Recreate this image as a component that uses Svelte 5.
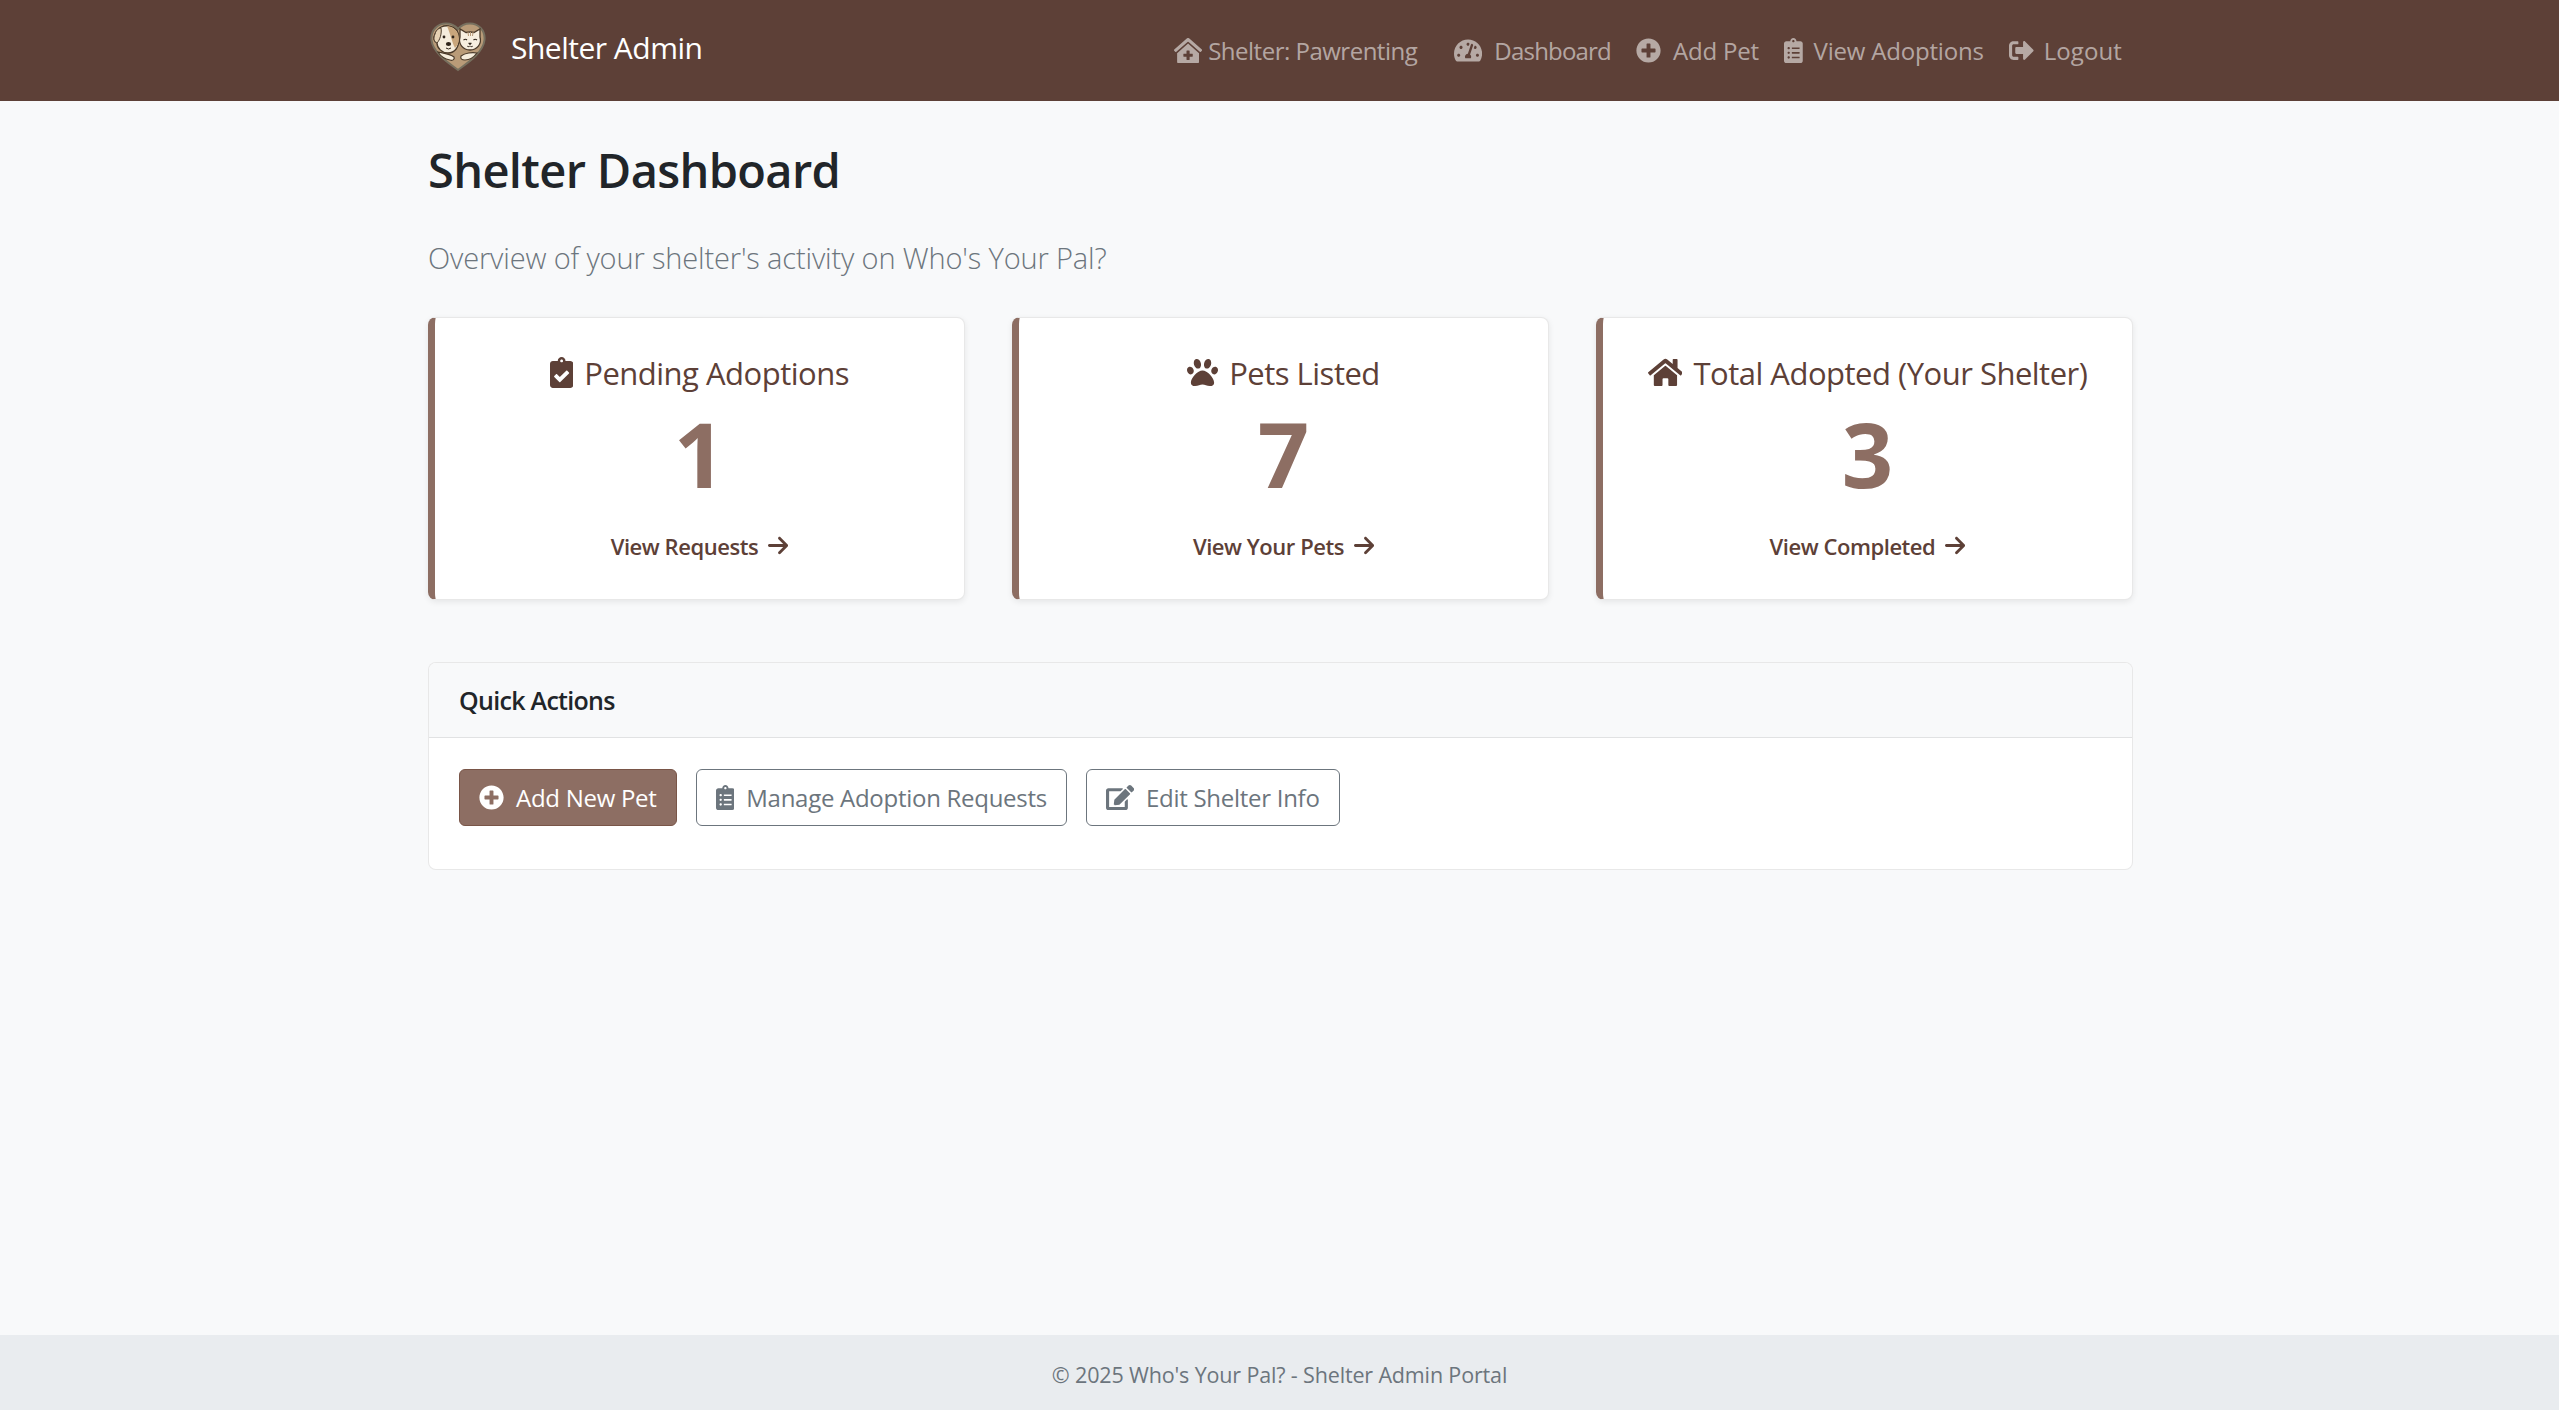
<script>
  const navLinks = [
    { label: 'Shelter: Pawrenting', icon: 'clinic', w: 576, gap: 6, after: 37, ls: -0.5 },
    { label: 'Dashboard', icon: 'gauge', w: 576, gap: 12, after: 25, ls: -0.8 },
    { label: 'Add Pet', icon: 'plus', w: 512, gap: 12, after: 25, ls: -0.2 },
    { label: 'View Adoptions', icon: 'list', w: 384, gap: 11, after: 25, ls: -0.2 },
    { label: 'Logout', icon: 'logout', w: 512, gap: 10, after: 0, ls: 0.1 }
  ];

  const stats = [
    { title: 'Pending Adoptions', value: 1, link: 'View Requests', icon: 'check', w: 384 },
    { title: 'Pets Listed', value: 7, link: 'View Your Pets', icon: 'paw', w: 512 },
    { title: 'Total Adopted (Your Shelter)', value: 3, link: 'View Completed', icon: 'home', w: 576 }
  ];

  const paths = {
    clinic: 'M288 115L69.47 307.71c-1.62 1.46-3.69 2.14-5.47 3.35V496a16 16 0 0 0 16 16h416a16 16 0 0 0 16-16V311.1c-1.7-1.16-3.72-1.82-5.26-3.2zm96 261a8 8 0 0 1-8 8h-56v56a8 8 0 0 1-8 8h-48a8 8 0 0 1-8-8v-56h-56a8 8 0 0 1-8-8v-48a8 8 0 0 1 8-8h56v-56a8 8 0 0 1 8-8h48a8 8 0 0 1 8 8v56h56a8 8 0 0 1 8 8zm186.69-139.72l-255.94-226a39.85 39.85 0 0 0-53.45 0l-256 226a16 16 0 0 0-1.21 22.6L25.5 282.7a16 16 0 0 0 22.6 1.21L277.42 81.63a16 16 0 0 1 21.17 0L527.91 283.9a16 16 0 0 0 22.6-1.21l21.4-23.82a16 16 0 0 0-1.22-22.59z',
    gauge: 'M288 32C128.94 32 0 160.94 0 320c0 52.8 14.25 102.26 39.06 144.8 5.61 9.62 16.3 15.2 27.44 15.2h443c11.14 0 21.83-5.58 27.44-15.2C561.75 422.26 576 372.8 576 320c0-159.06-128.94-288-288-288zm0 64c14.71 0 26.58 10.13 30.32 23.65-1.11 2.26-2.64 4.23-3.45 6.67l-9.22 27.67c-5.13 3.49-10.97 6.01-17.64 6.01-17.67 0-32-14.33-32-32S270.33 96 288 96zM96 384c-17.67 0-32-14.33-32-32s14.33-32 32-32 32 14.33 32 32-14.33 32-32 32zm48-160c-17.67 0-32-14.33-32-32s14.33-32 32-32 32 14.33 32 32-14.33 32-32 32zm246.77-72.41l-61.33 184C343.13 347.33 352 364.54 352 384c0 11.72-3.38 22.55-8.88 32H232.88c-5.5-9.45-8.88-20.28-8.88-32 0-33.94 26.5-61.43 59.9-63.59l61.34-184.01c4.17-12.56 17.73-19.45 30.36-15.17 12.57 4.19 19.35 17.79 15.17 30.36zm14.66 57.2l15.52-46.55c3.47-1.29 7.13-2.23 11.05-2.23 17.67 0 32 14.33 32 32s-14.33 32-32 32c-11.38-.01-20.89-6.28-26.57-15.22zM480 384c-17.67 0-32-14.33-32-32s14.33-32 32-32 32 14.33 32 32-14.33 32-32 32z',
    plus: 'M256 8C119 8 8 119 8 256s111 248 248 248 248-111 248-248S393 8 256 8zm144 276c0 6.6-5.4 12-12 12h-92v92c0 6.6-5.4 12-12 12h-56c-6.6 0-12-5.4-12-12v-92h-92c-6.6 0-12-5.4-12-12v-56c0-6.6 5.4-12 12-12h92v-92c0-6.6 5.4-12 12-12h56c6.6 0 12 5.4 12 12v92h92c6.6 0 12 5.4 12 12v56z',
    list: 'M336 64h-80c0-35.3-28.7-64-64-64s-64 28.7-64 64H48C21.5 64 0 85.5 0 112v352c0 26.5 21.5 48 48 48h288c26.5 0 48-21.5 48-48V112c0-26.5-21.5-48-48-48zM96 424c-13.3 0-24-10.7-24-24s10.7-24 24-24 24 10.7 24 24-10.7 24-24 24zm0-96c-13.3 0-24-10.7-24-24s10.7-24 24-24 24 10.7 24 24-10.7 24-24 24zm0-96c-13.3 0-24-10.7-24-24s10.7-24 24-24 24 10.7 24 24-10.7 24-24 24zm96-192c13.3 0 24 10.7 24 24s-10.7 24-24 24-24-10.7-24-24 10.7-24 24-24zm128 368c0 4.4-3.6 8-8 8H168c-4.4 0-8-3.6-8-8v-16c0-4.4 3.6-8 8-8h144c4.4 0 8 3.6 8 8v16zm0-96c0 4.4-3.6 8-8 8H168c-4.4 0-8-3.6-8-8v-16c0-4.4 3.6-8 8-8h144c4.4 0 8 3.6 8 8v16zm0-96c0 4.4-3.6 8-8 8H168c-4.4 0-8-3.6-8-8v-16c0-4.4 3.6-8 8-8h144c4.4 0 8 3.6 8 8v16z',
    logout: 'M497 273L329 441c-15 15-41 4.5-41-17v-96H152c-13.3 0-24-10.7-24-24v-96c0-13.3 10.7-24 24-24h136V88c0-21.4 25.9-32 41-17l168 168c9.3 9.4 9.3 24.6 0 34zM192 436v-40c0-6.6-5.4-12-12-12H96c-17.7 0-32-14.3-32-32V160c0-17.7 14.3-32 32-32h84c6.6 0 12-5.4 12-12V76c0-6.6-5.4-12-12-12H96c-53 0-96 43-96 96v192c0 53 43 96 96 96h84c6.6 0 12-5.4 12-12z',
    check: 'M336 64h-80c0-35.3-28.7-64-64-64s-64 28.7-64 64H48C21.5 64 0 85.5 0 112v352c0 26.5 21.5 48 48 48h288c26.5 0 48-21.5 48-48V112c0-26.5-21.5-48-48-48zM192 40c13.3 0 24 10.7 24 24s-10.7 24-24 24-24-10.7-24-24 10.7-24 24-24zm121.2 231.8l-143 141.8c-4.7 4.7-12.3 4.6-17-.1l-82.6-83.3c-4.7-4.7-4.6-12.3.1-17L99.1 285c4.7-4.7 12.3-4.6 17 .1l46 46.4 106-105.2c4.7-4.7 12.3-4.6 17 .1l28.2 28.4c4.7 4.8 4.6 12.3-.1 17z',
    paw: 'M256 224c-79.41 0-192 122.76-192 200.25 0 34.9 26.81 55.75 71.74 55.75 48.84 0 81.09-25.08 120.26-25.08 39.51 0 71.85 25.08 120.26 25.08 44.93 0 71.74-20.85 71.74-55.75C448 346.76 335.41 224 256 224zm-147.28-12.61c-10.4-34.65-42.44-57.09-71.56-50.13-29.12 6.96-44.29 40.69-33.89 75.34 10.4 34.65 42.44 57.09 71.56 50.13 29.12-6.96 44.29-40.69 33.89-75.34zm84.72-20.78c30.94-8.14 46.42-49.94 34.58-93.36s-46.52-72.01-77.46-63.87-46.42 49.94-34.58 93.36c11.84 43.42 46.52 72.01 77.46 63.87zm281.39-29.34c-29.12-6.96-61.15 15.48-71.56 50.13-10.4 34.65 4.77 68.38 33.89 75.34 29.12 6.96 61.15-15.48 71.56-50.13 10.4-34.65-4.77-68.38-33.89-75.34zm-156.27 29.34c30.94 8.14 65.62-20.45 77.46-63.87 11.84-43.42-3.64-85.21-34.58-93.36s-65.62 20.45-77.46 63.87c-11.84 43.42 3.64 85.22 34.58 93.36z',
    home: 'M280.37 148.26L96 300.11V464a16 16 0 0 0 16 16l112.06-.29a16 16 0 0 0 15.92-16V368a16 16 0 0 1 16-16h64a16 16 0 0 1 16 16v95.64a16 16 0 0 0 16 16.05L464 480a16 16 0 0 0 16-16V300L295.67 148.26a12.19 12.19 0 0 0-15.3 0zM571.6 251.47L488 182.56V44.05a12 12 0 0 0-12-12h-56a12 12 0 0 0-12 12v72.61L318.47 43a48 48 0 0 0-61 0L4.34 251.47a12 12 0 0 0-1.6 16.9l25.5 31A12 12 0 0 0 45.15 301l235.22-193.74a12.19 12.19 0 0 1 15.3 0L530.9 301a12 12 0 0 0 16.9-1.6l25.5-31a12 12 0 0 0-1.7-16.93z',
    arrow: 'M438.6 278.6c12.5-12.5 12.5-32.8 0-45.3l-160-160c-12.5-12.5-32.8-12.5-45.3 0s-12.5 32.8 0 45.3L338.8 224 32 224c-17.7 0-32 14.3-32 32s14.3 32 32 32l306.7 0L233.4 393.4c-12.5 12.5-12.5 32.8 0 45.3s32.8 12.5 45.3 0l160-160z',
    edit: 'M402.6 83.2l90.2 90.2c3.8 3.8 3.8 10 0 13.8L274.4 405.6l-92.8 10.3c-12.4 1.4-22.9-9.1-21.5-21.5l10.3-92.8L388.8 83.2c3.8-3.8 10-3.8 13.8 0zm162-22.9l-48.8-48.8c-15.2-15.2-39.9-15.2-55.2 0l-35.4 35.4c-3.8 3.8-3.8 10 0 13.8l90.2 90.2c3.8 3.8 10 3.8 13.8 0l35.4-35.4c15.2-15.3 15.2-40 0-55.2zM384 346.2V448H64V128h229.8c3.2 0 6.2-1.3 8.5-3.5l40-40c7.6-7.6 2.2-20.5-8.5-20.5H48C21.5 64 0 85.5 0 112v352c0 26.5 21.5 48 48 48h352c26.5 0 48-21.5 48-48V306.2c0-10.7-12.9-16-20.5-8.5l-40 40c-2.2 2.3-3.5 5.3-3.5 8.5z'
  };
</script>

{#snippet icon(name, w, cls)}
  <svg class={cls} viewBox="0 0 {w} 512" aria-hidden="true"><path fill="currentColor" d={paths[name]} /></svg>
{/snippet}

<div class="page">
  <header class="navbar">
    <div class="wrap nav-inner">
      <a class="brand" href="#top">
        <svg class="logo" viewBox="0 0 56 50" aria-hidden="true">
          <path d="M28 48 C22 43 3 32 1.5 18 C.5 8 8 1.5 16 1.5 C21 1.5 25.500 4 28 7 C30.500 4 35 1.500 40 1.500 C48 1.500 55.500 8 54.500 18 C53 32 34 43 28 48Z" fill="#b99b78" stroke="#77705f" stroke-width="2"/>
          <path d="M5 12 C8 5 14 3 19 4 C25 5 29 9 29 17 C29 25 25 31 18 31 C12 31 7 26 7 21 C4 20 3 16 5 12Z" fill="#f5ecdc" stroke="#4a3a2a" stroke-width="1.300"/>
          <path d="M17 4 C24 5 29 9 29 17 C29 21 27 24 25 26 C22 20 21 14 17 4Z" fill="#c9a67c"/>
          <path d="M5 12 C6 8 9 6 11 6 C12 11 10 18 7 21 C4 20 3 16 5 12Z" fill="#e6d3b4" stroke="#4a3a2a" stroke-width="1"/>
          <circle cx="14" cy="15" r="1.400" fill="#2f241b"/>
          <circle cx="23" cy="15" r="1.400" fill="#2f241b"/>
          <ellipse cx="18.500" cy="22" rx="2.600" ry="1.900" fill="#2f241b"/>
          <path d="M16 26 Q18.500 28 21 26" fill="none" stroke="#2f241b" stroke-width="1"/>
          <path d="M30 15 L30 7 L36 10.500 Q40 9.500 44 10.500 L50 7 L50 15 C52 22 47 28 40 28 C33 28 28 22 30 15Z" fill="#f7efe0" stroke="#4a3a2a" stroke-width="1.300"/>
          <path d="M38 10 L38.500 14 M40.500 10 L40.500 14 M43 10 L42.500 14" stroke="#b99b78" stroke-width="1"/>
          <path d="M33.500 18 Q35.500 16.500 37 18 M43.500 18 Q45 16.500 47 18" fill="none" stroke="#2f241b" stroke-width="1.100"/>
          <path d="M38.500 21 L41.500 21 L40 23Z M37 24 Q38.500 25.500 40 24 Q41.500 25.500 43 24" fill="#2f241b" stroke="#2f241b" stroke-width=".5"/>
          <path d="M8 30 C12 31 20 32 24 35 C25 37 23 39 20 38 C15 37 11 35 8 30Z" fill="#f5ecdc" stroke="#4a3a2a" stroke-width="1.200"/>
          <path d="M47 31 C42 30 35 31 31 34 C30 37 32 38 35 38 C40 38 44 35 47 31Z" fill="#f5ecdc" stroke="#4a3a2a" stroke-width="1.200"/>
        </svg>
        <span>Shelter Admin</span>
      </a>
      <nav class="nav-links">
        {#each navLinks as item}
          <a class="nav-link" href="#top" style="gap: {item.gap}px; margin-right: {item.after}px; letter-spacing: {item.ls}px">
            {@render icon(item.icon, item.w, 'nav-icon')}
            <span>{item.label}</span>
          </a>
        {/each}
      </nav>
    </div>
  </header>

  <main class="wrap main">
    <h1>Shelter Dashboard</h1>
    <p class="lead">Overview of your shelter's activity on Who's Your Pal?</p>

    <section class="stats">
      {#each stats as s}
        <div class="stat-card">
          <h2 class="stat-title">
            {@render icon(s.icon, s.w, 'stat-icon')}
            <span>{s.title}</span>
          </h2>
          <div class="stat-value">{s.value}</div>
          <a class="stat-link" href="#top">
            <span>{s.link}</span>
            {@render icon('arrow', 448, 'arrow-icon')}
          </a>
        </div>
      {/each}
    </section>

    <section class="actions">
      <div class="actions-head">Quick Actions</div>
      <div class="actions-body">
        <a class="btn btn-primary" href="#top">
          {@render icon('plus', 512, 'btn-icon')}
          <span>Add New Pet</span>
        </a>
        <a class="btn btn-outline" href="#top">
          {@render icon('list', 384, 'btn-icon')}
          <span>Manage Adoption Requests</span>
        </a>
        <a class="btn btn-outline" href="#top">
          {@render icon('edit', 576, 'btn-icon')}
          <span>Edit Shelter Info</span>
        </a>
      </div>
    </section>
  </main>

  <footer class="footer">© 2025 Who's Your Pal? - Shelter Admin Portal</footer>
</div>

<style>
  :global(body) {
    margin: 0;
    background: #f8f9fa;
    font-family: "Open Sans", "Noto Sans", sans-serif;
    color: #212529;
  }

  a {
    text-decoration: none;
    color: inherit;
  }

  .page {
    min-height: 100vh;
    display: flex;
    flex-direction: column;
  }

  .wrap {
    width: 1705px;
    margin-left: 428px;
  }

  .navbar {
    height: 101px;
    background: #5d4037;
    flex: none;
  }

  .nav-inner {
    height: 100%;
    display: flex;
    align-items: center;
    justify-content: space-between;
  }

  .brand {
    display: flex;
    align-items: center;
    gap: 25px;
    color: #fff;
    font-size: 30px;
    letter-spacing: -0.5px;
    margin-top: -7px;
  }

  .logo {
    width: 56px;
    height: 50px;
    margin-left: 2px;
  }

  .nav-links {
    display: flex;
    align-items: center;
    margin-right: 11px;
  }

  .nav-link {
    display: flex;
    align-items: center;
    color: rgba(255, 255, 255, 0.55);
    font-size: 24px;
  }

  .nav-icon {
    height: 25px;
    width: auto;
  }

  .main {
    flex: 1;
  }

  h1 {
    margin: 41px 0 0;
    font-size: 47px;
    line-height: 1.2;
    font-weight: 600;
    letter-spacing: -0.65px;
  }

  .lead {
    margin: 38px 0 0;
    font-size: 29px;
    line-height: 1.5;
    font-weight: 300;
    letter-spacing: -0.15px;
    color: #6c757d;
  }

  .stats {
    display: grid;
    grid-template-columns: repeat(3, 1fr);
    gap: 47px;
    margin-top: 37px;
  }

  .stat-card {
    height: 283px;
    box-sizing: border-box;
    background: #fff;
    border: 1px solid rgba(0, 0, 0, 0.09);
    border-left: 7px solid #8d6e63;
    border-radius: 8px;
    box-shadow: 0 2px 6px rgba(0, 0, 0, 0.08);
    text-align: center;
    padding-top: 32px;
  }

  .stat-title {
    margin: 0;
    display: flex;
    justify-content: center;
    align-items: center;
    gap: 11px;
    color: #5d4037;
    font-size: 31px;
    line-height: 46px;
    font-weight: 530;
    letter-spacing: -0.5px;
  }

  .stat-icon {
    height: 31px;
    width: auto;
  }

  .stat-value {
    color: #8d6e63;
    font-size: 90px;
    font-weight: 700;
    line-height: 100px;
    margin-top: 7px;
  }

  .stat-link {
    display: inline-flex;
    align-items: center;
    gap: 10px;
    margin-top: 28px;
    color: #5d4037;
    font-size: 22px;
    font-weight: 550;
    letter-spacing: -0.45px;
  }

  .arrow-icon {
    height: 23px;
    width: auto;
  }

  .actions {
    margin-top: 62px;
    background: #fff;
    border: 1px solid rgba(0, 0, 0, 0.09);
    border-radius: 8px;
    overflow: hidden;
  }

  .actions-head {
    height: 75px;
    box-sizing: border-box;
    display: flex;
    align-items: center;
    padding: 0 30px;
    background: #f8f9fa;
    border-bottom: 1px solid rgba(0, 0, 0, 0.09);
    font-size: 25px;
    font-weight: 600;
    letter-spacing: -0.7px;
    color: #212529;
  }

  .actions-body {
    display: flex;
    gap: 19px;
    padding: 31px 30px 43px;
  }

  .btn {
    height: 57px;
    box-sizing: border-box;
    display: flex;
    align-items: center;
    gap: 12px;
    padding: 0 19px;
    border: 1px solid #6c757d;
    border-radius: 6px;
    font-size: 24px;
    letter-spacing: -0.28px;
    color: #6c757d;
  }

  .btn-primary {
    background: #8d6e63;
    border-color: #795548;
    color: #fff;
  }

  .btn-icon {
    height: 25px;
    width: auto;
  }

  .footer {
    height: 75px;
    box-sizing: border-box;
    padding-top: 4px;
    flex: none;
    background: #e9ecef;
    display: flex;
    align-items: center;
    justify-content: center;
    color: #6c757d;
    font-size: 21.5px;
    letter-spacing: -0.15px;
  }
</style>
